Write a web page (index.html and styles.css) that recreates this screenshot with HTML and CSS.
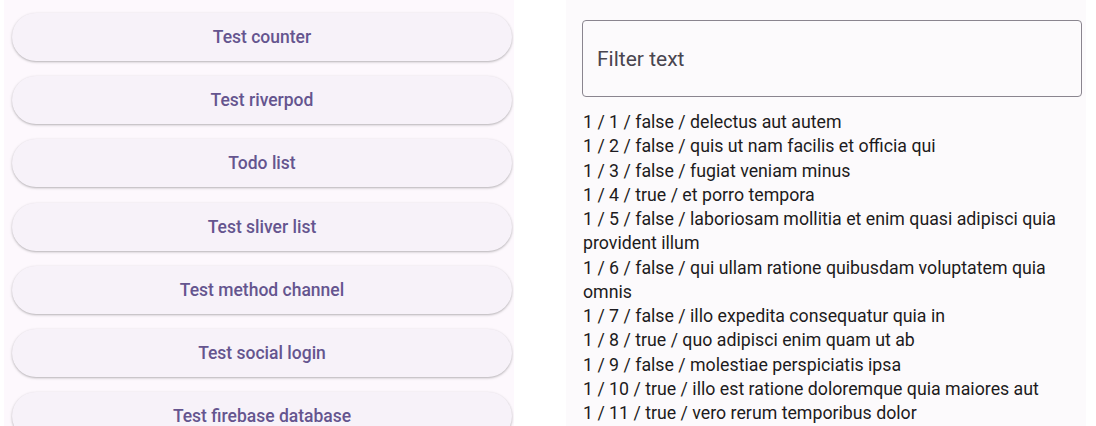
FILE: index.html
```html
<!DOCTYPE html>
<html>
<head>
<meta charset="utf-8">
<link rel="stylesheet" href="styles.css">
</head>
<body>
<div class="screen">
  <div class="left">
    <button class="btn">Test counter</button>
    <button class="btn">Test riverpod</button>
    <button class="btn">Todo list</button>
    <button class="btn">Test sliver list</button>
    <button class="btn">Test method channel</button>
    <button class="btn">Test social login</button>
    <button class="btn">Test firebase database</button>
  </div>
  <div class="right">
    <div class="field"><span class="placeholder">Filter text</span></div>
    <div class="list">
      <div>1 / 1 / false / delectus aut autem</div>
      <div>1 / 2 / false / quis ut nam facilis et officia qui</div>
      <div>1 / 3 / false / fugiat veniam minus</div>
      <div>1 / 4 / true / et porro tempora</div>
      <div>1 / 5 / false / laboriosam mollitia et enim quasi adipisci quia provident illum</div>
      <div>1 / 6 / false / qui ullam ratione quibusdam voluptatem quia omnis</div>
      <div>1 / 7 / false / illo expedita consequatur quia in</div>
      <div>1 / 8 / true / quo adipisci enim quam ut ab</div>
      <div>1 / 9 / false / molestiae perspiciatis ipsa</div>
      <div>1 / 10 / true / illo est ratione doloremque quia maiores aut</div>
      <div>1 / 11 / true / vero rerum temporibus dolor</div>
    </div>
  </div>
</div>
</body>
</html>
```
FILE: styles.css
```css
html, body {
  margin: 0;
  padding: 0;
  background: #ffffff;
  width: 1096px;
  height: 426px;
  overflow: hidden;
  font-family: Roboto, "Liberation Sans", sans-serif;
}
.screen {
  display: flex;
  height: 426px;
}
.left {
  width: 510px;
  margin-left: 4px;
  background: #fdf8fd;
  padding: 13px 2px 0 8px;
  box-sizing: border-box;
  display: flex;
  flex-direction: column;
  gap: 15.2px;
  overflow: hidden;
}
.btn {
  flex: none;
  height: 48px;
  width: 500px;
  border: none;
  border-radius: 24px;
  background: #f7f2f9;
  color: #65558f;
  font-family: Roboto, "Liberation Sans", sans-serif;
  font-weight: 500;
  font-size: 17.5px;
  box-shadow: 0 1px 2px rgba(0, 0, 0, 0.22), 0 1px 3px 1px rgba(0, 0, 0, 0.06);
  padding: 0;
}
.right {
  margin-left: 52px;
  width: 520px;
  background: #fcfafc;
  padding: 20px 4px 0 16px;
  box-sizing: border-box;
  overflow: hidden;
}
.field {
  height: 77px;
  border: 1px solid #8a858f;
  border-radius: 4px;
  box-sizing: border-box;
  display: flex;
  align-items: center;
  padding-left: 14px;
}
.placeholder {
  font-size: 21px;
  color: #49454f;
}
.list {
  margin-top: 13px;
  padding-left: 1px;
  width: 490px;
  font-size: 17.75px;
  line-height: 24.25px;
  color: #1d1b20;
}
```
